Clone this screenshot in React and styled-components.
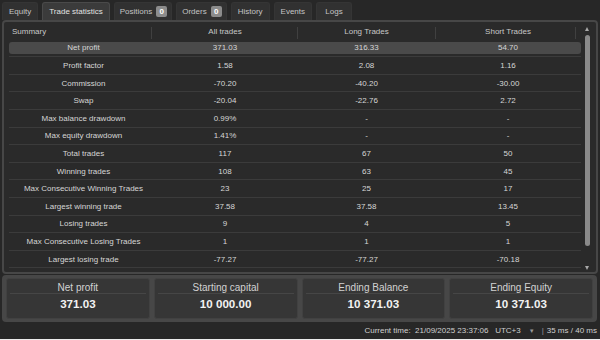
import React from "react";
import styled, { createGlobalStyle } from "styled-components";

const Global = createGlobalStyle`
  html, body { margin: 0; padding: 0; background: #ececec; }
  body { font-family: "Liberation Sans", Arial, sans-serif; }
  * { box-sizing: border-box; }
`;

const Root = styled.div`
  width: 600px;
  height: 339px;
  background: #272727;
  display: flex;
  flex-direction: column;
  overflow: hidden;
`;

const TabBar = styled.div`
  height: 20px;
  display: flex;
  align-items: flex-end;
  gap: 4px;
  padding-left: 2px;
`;

const Tab = styled.div`
  height: 18px;
  min-width: 36px;
  padding: 0 ${(p) => (p.$badge ? "4px 0 5px" : "6px")};
  display: flex;
  align-items: center;
  justify-content: center;
  gap: 4px;
  font-size: 8px;
  color: ${(p) => (p.$active ? "#e2e2e2" : "#c4c4c4")};
  background: ${(p) => (p.$active ? "#3b3b3b" : "#313131")};
  border: 1px solid ${(p) => (p.$active ? "#4a4a4a" : "#353535")};
  border-bottom: none;
  border-radius: 3px 3px 0 0;
`;

const Badge = styled.span`
  width: 11px;
  height: 11px;
  border-radius: 2px;
  background: #8c8c8c;
  color: #ffffff;
  font-weight: bold;
  font-size: 8px;
  display: flex;
  align-items: center;
  justify-content: center;
`;

const Panel = styled.div`
  margin: 0 2px;
  height: 254px;
  border: 2px solid #474747;
  border-radius: 4px;
  background: #2a2a2a;
  display: flex;
  padding: 0 4px 0 5px;
`;

const Table = styled.div`
  width: 572px;
  display: flex;
  flex-direction: column;
`;

const Grid = styled.div`
  display: grid;
  grid-template-columns: 143px 146px 137px 146px;
`;

const HeaderRow = styled(Grid)`
  height: 17.7px;
  align-items: center;
  padding-top: 2px;
  font-size: 8px;
  color: #c8c8c8;
`;

const HeaderCell = styled.div`
  position: relative;
  height: 100%;
  display: flex;
  align-items: center;
  justify-content: ${(p) => (p.$left ? "flex-start" : "center")};
  padding-left: ${(p) => (p.$left ? "3px" : "0")};
  &::after {
    content: "";
    position: absolute;
    right: ${(p) => p.$divRight || 0}px;
    top: 3px;
    bottom: 1px;
    width: 1px;
    background: #404040;
  }
`;

const Row = styled(Grid)`
  height: 17.6px;
  align-items: center;
  border-bottom: 1px solid #3b3b3b;
  font-size: 8px;
  color: #d6d6d6;
  padding: ${(p) => (p.$hl ? "2px 0" : "0")};
`;

const RowInner = styled(Grid)`
  grid-column: 1 / -1;
  height: 100%;
  align-items: center;
  background: ${(p) => (p.$hl ? "#4a4a4a" : "transparent")};
  border-radius: 3px;
`;

const Cell = styled.div`
  text-align: center;
  padding-left: ${(p) => (p.$first ? "6px" : "0")};
  white-space: nowrap;
`;

const ScrollBar = styled.div`
  width: 10px;
  margin-left: 1px;
  display: flex;
  flex-direction: column;
  align-items: center;
  padding: 5px 0 2px;
`;

const Arrow = styled.div`
  width: 0;
  height: 0;
  border-left: 2.5px solid transparent;
  border-right: 2.5px solid transparent;
  ${(p) =>
    p.$down
      ? "border-top: 4px solid #a8a8a8;"
      : "border-bottom: 4px solid #a8a8a8;"}
`;

const Track = styled.div`
  flex: 1;
  width: 100%;
  display: flex;
  justify-content: center;
  padding: 4px 0 20px;
`;

const Thumb = styled.div`
  width: 5px;
  height: 100%;
  border-radius: 3px;
  background: #8a8a8a;
`;

const SummaryBar = styled.div`
  margin: 1px 3px 0 2px;
  height: 47px;
  background: #474747;
  border-radius: 4px;
  padding: 3px 4px;
  display: grid;
  grid-template-columns: repeat(4, 1fr);
  gap: 4px;
`;

const Card = styled.div`
  background: #363636;
  border: 1px solid #414141;
  border-radius: 3px;
  display: flex;
  flex-direction: column;
  align-items: stretch;
  padding: 2px 3px 0;
`;

const CardLabel = styled.div`
  height: 13px;
  font-size: 10px;
  line-height: 13px;
  color: #d2d2d2;
  text-align: center;
  border-bottom: 1px solid #464646;
`;

const CardValue = styled.div`
  font-size: 11.6px;
  font-weight: bold;
  color: #f2f2f2;
  text-align: center;
  line-height: 20px;
`;

const StatusBar = styled.div`
  flex: 1;
  display: flex;
  align-items: center;
  justify-content: flex-end;
  padding-right: 3px;
  font-size: 8px;
  color: #cfcfcf;
  white-space: pre;
`;

const Caret = styled.span`
  font-size: 6px;
  color: #9a9a9a;
  margin: 0 7px 0 8px;
`;

const Sep = styled.span`
  color: #9a9a9a;
  margin-right: 3px;
`;

const tabs = [
  { label: "Equity" },
  { label: "Trade statistics", active: true },
  { label: "Positions", badge: "0" },
  { label: "Orders", badge: "0" },
  { label: "History" },
  { label: "Events" },
  { label: "Logs" },
];

const rows = [
  ["Net profit", "371.03", "316.33", "54.70"],
  ["Profit factor", "1.58", "2.08", "1.16"],
  ["Commission", "-70.20", "-40.20", "-30.00"],
  ["Swap", "-20.04", "-22.76", "2.72"],
  ["Max balance drawdown", "0.99%", "-", "-"],
  ["Max equity drawdown", "1.41%", "-", "-"],
  ["Total trades", "117", "67", "50"],
  ["Winning trades", "108", "63", "45"],
  ["Max Consecutive Winning Trades", "23", "25", "17"],
  ["Largest winning trade", "37.58", "37.58", "13.45"],
  ["Losing trades", "9", "4", "5"],
  ["Max Consecutive Losing Trades", "1", "1", "1"],
  ["Largest losing trade", "-77.27", "-77.27", "-70.18"],
];

const cards = [
  ["Net profit", "371.03"],
  ["Starting capital", "10 000.00"],
  ["Ending Balance", "10 371.03"],
  ["Ending Equity", "10 371.03"],
];

export default function App() {
  return (
    <>
      <Global />
      <Root>
        <TabBar>
          {tabs.map((t) => (
            <Tab key={t.label} $active={t.active} $badge={!!t.badge}>
              {t.label}
              {t.badge && <Badge>{t.badge}</Badge>}
            </Tab>
          ))}
        </TabBar>
        <Panel>
          <Table>
            <HeaderRow>
              <HeaderCell $left>Summary</HeaderCell>
              <HeaderCell>All trades</HeaderCell>
              <HeaderCell $divRight={-1}>Long Trades</HeaderCell>
              <HeaderCell $divRight={5}>Short Trades</HeaderCell>
            </HeaderRow>
            {rows.map((r, i) => (
              <Row key={r[0]} $hl={i === 0}>
                <RowInner $hl={i === 0}>
                  {r.map((c, j) => (
                    <Cell key={j} $first={j === 0}>
                      {c}
                    </Cell>
                  ))}
                </RowInner>
              </Row>
            ))}
          </Table>
          <ScrollBar>
            <Arrow />
            <Track>
              <Thumb />
            </Track>
            <Arrow $down />
          </ScrollBar>
        </Panel>
        <SummaryBar>
          {cards.map(([l, v]) => (
            <Card key={l}>
              <CardLabel>{l}</CardLabel>
              <CardValue>{v}</CardValue>
            </Card>
          ))}
        </SummaryBar>
        <StatusBar>
          {"Current time:  21/09/2025 23:37:06   UTC+3"}
          <Caret>▼</Caret>
          <Sep>|</Sep>
          {"35 ms / 40 ms"}
        </StatusBar>
      </Root>
    </>
  );
}
